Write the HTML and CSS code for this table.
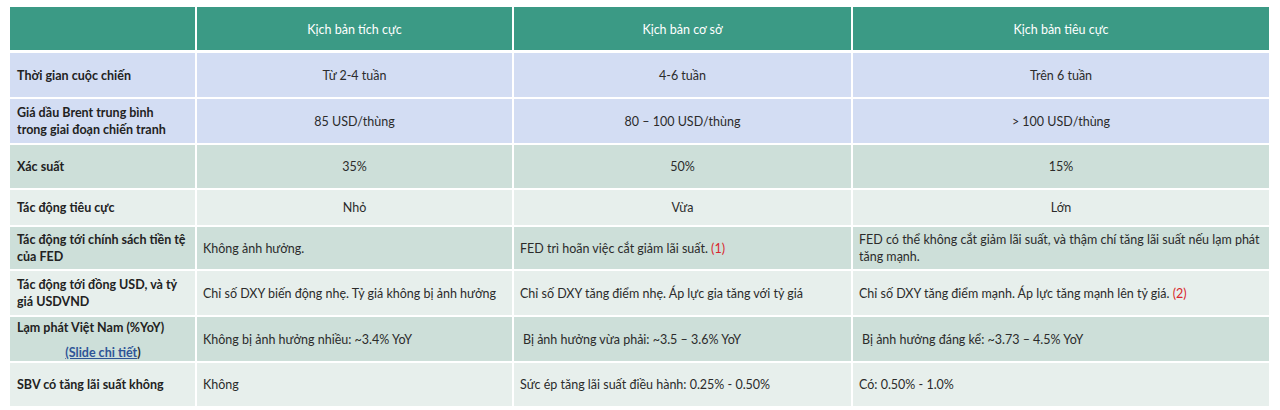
FILE: index.html
```html
<!DOCTYPE html>
<html lang="vi">
<head>
<meta charset="utf-8">
<title>Kịch bản</title>
<link rel="stylesheet" href="styles.css">
</head>
<body>
<div class="table">
  <div class="cell head"></div>
  <div class="cell head c">Kịch bản tích cực</div>
  <div class="cell head c">Kịch bản cơ sở</div>
  <div class="cell head c">Kịch bản tiêu cực</div>

  <div class="cell blue lbl">Thời gian cuộc chiến</div>
  <div class="cell blue c">Từ 2-4 tuần</div>
  <div class="cell blue c">4-6 tuần</div>
  <div class="cell blue c">Trên 6 tuần</div>

  <div class="cell blue lbl"><span>Giá dầu Brent trung bình<br>trong giai đoạn chiến tranh</span></div>
  <div class="cell blue c">85 USD/thùng</div>
  <div class="cell blue c">80 – 100 USD/thùng</div>
  <div class="cell blue c">&gt; 100 USD/thùng</div>

  <div class="cell dark lbl">Xác suất</div>
  <div class="cell dark c">35%</div>
  <div class="cell dark c">50%</div>
  <div class="cell dark c">15%</div>

  <div class="cell light lbl">Tác động tiêu cực</div>
  <div class="cell light c">Nhỏ</div>
  <div class="cell light c">Vừa</div>
  <div class="cell light c">Lớn</div>

  <div class="cell dark lbl">Tác động tới chính sách tiền tệ của FED</div>
  <div class="cell dark">Không ảnh hưởng.</div>
  <div class="cell dark"><span>FED trì hoãn việc cắt giảm lãi suất. <span class="red">(1)</span></span></div>
  <div class="cell dark">FED có thể không cắt giảm lãi suất, và thậm chí tăng lãi suất nếu lạm phát tăng mạnh.</div>

  <div class="cell light lbl">Tác động tới đồng USD, và tỷ giá USDVND</div>
  <div class="cell light">Chỉ số DXY biến động nhẹ. Tỷ giá không bị ảnh hưởng</div>
  <div class="cell light">Chỉ số DXY tăng điểm nhẹ. Áp lực gia tăng với tỷ giá</div>
  <div class="cell light"><span>Chỉ số DXY tăng điểm mạnh. Áp lực tăng mạnh lên tỷ giá. <span class="red">(2)</span></span></div>

  <div class="cell dark lbl stack">
    <span>Lạm phát Việt Nam (%YoY)</span>
    <span class="linkwrap"><a class="link" href="#">(Slide chi tiết</a>)</span>
  </div>
  <div class="cell dark">Không bị ảnh hưởng nhiều: ~3.4% YoY</div>
  <div class="cell dark indent">Bị ảnh hưởng vừa phải: ~3.5 – 3.6% YoY</div>
  <div class="cell dark indent">Bị ảnh hưởng đáng kể: ~3.73 – 4.5% YoY</div>

  <div class="cell light lbl">SBV có tăng lãi suất không</div>
  <div class="cell light">Không</div>
  <div class="cell light">Sức ép tăng lãi suất điều hành: 0.25% - 0.50%</div>
  <div class="cell light">Có: 0.50% - 1.0%</div>
</div>
</body>
</html>
```

FILE: styles.css
```css
html, body {
  margin: 0;
  padding: 0;
  background: #ffffff;
}
body {
  font-family: Lato, "Open Sans", "Liberation Sans", sans-serif;
  font-size: 12.5px;
  color: #2b2b2b;
}
.table {
  display: grid;
  grid-template-columns: 185px 315px 337px 416px;
  grid-template-rows: 44px 44px 44px 43px 35px 42px 44px 44px 43px;
  column-gap: 2px;
  row-gap: 2px;
  margin: 7px 0 0 10px;
  width: 1259px;
}
.cell {
  display: flex;
  align-items: center;
  padding: 0 6px;
  line-height: 17px;
  box-sizing: border-box;
}
.c {
  justify-content: center;
  text-align: center;
}
.head {
  background: #3b9a85;
  color: #ffffff;
  height: 43px;
  padding-top: 1px;
}
.blue { background: #d3ddf3; }
.dark { background: #cddfd9; }
.light { background: #e7efec; }
.lbl {
  font-weight: 700;
  padding-left: 7px;
  color: #222222;
}
.indent { padding-left: 9px; }
.red { color: #d9262b; }
.stack {
  flex-direction: column;
  align-items: stretch;
  justify-content: space-between;
  padding-top: 2px;
  padding-bottom: 0;
}
.linkwrap {
  text-align: center;
  font-weight: 700;
  color: #2b2b2b;
}
.link {
  color: #2f5597;
  text-decoration: underline;
}
```
